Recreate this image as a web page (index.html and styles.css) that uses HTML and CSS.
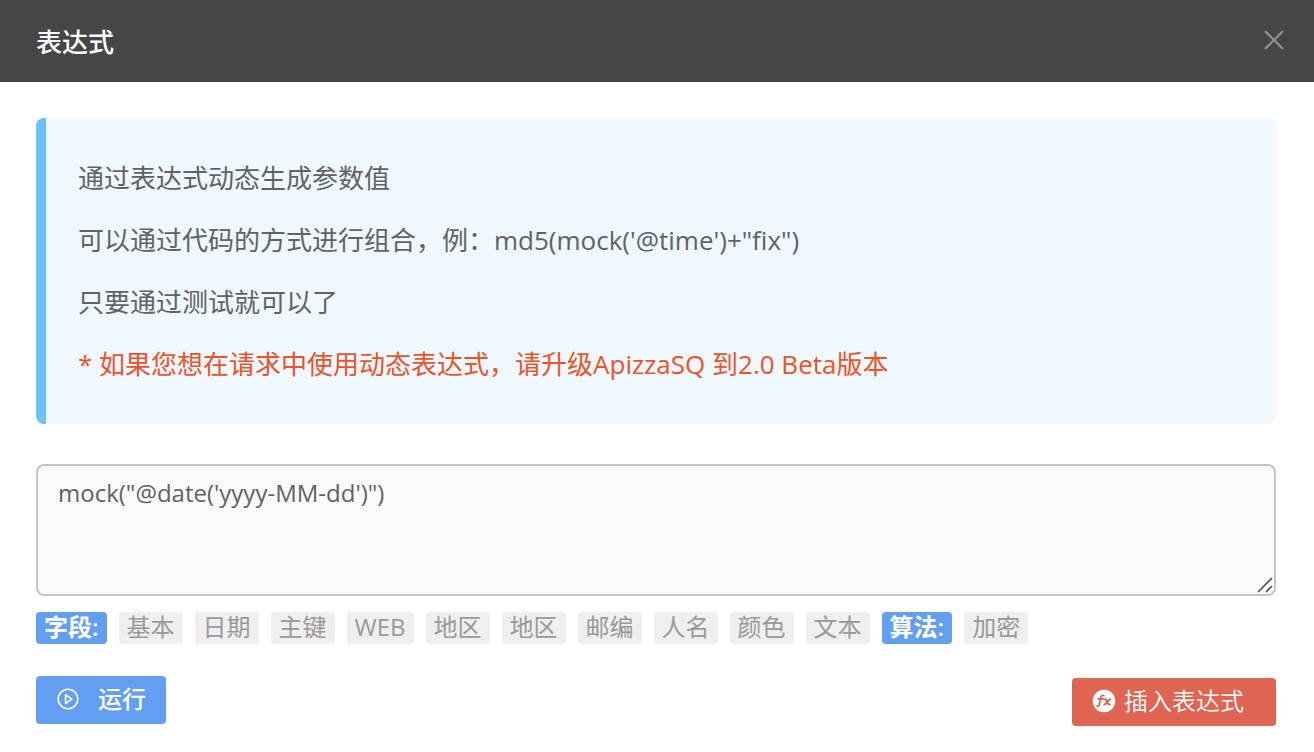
FILE: index.html
```html
<!DOCTYPE html>
<html lang="zh-CN">
<head>
<meta charset="utf-8">
<title>表达式</title>
<link rel="stylesheet" href="styles.css">
</head>
<body>
<header class="header">
  <h1 class="title">表达式</h1>
  <button class="close" type="button" aria-label="关闭">
    <svg width="20" height="20" viewBox="0 0 20 20" fill="none" stroke="currentColor" stroke-width="2"><path d="M1 1l18 18M19 1L1 19"/></svg>
  </button>
</header>
<main class="content">
  <section class="notice">
    <p>通过表达式动态生成参数值</p>
    <p>可以通过代码的方式进行组合，例：md5(mock('@time')+"fix")</p>
    <p>只要通过测试就可以了</p>
    <p class="warn">* 如果您想在请求中使用动态表达式，请升级ApizzaSQ 到2.0 Beta版本</p>
  </section>
  <div class="field">
    <textarea class="editor" aria-label="表达式">mock("@date('yyyy-MM-dd')")</textarea>
    <svg class="grip" width="16" height="16" viewBox="0 0 16 16" fill="none" stroke="#505050" stroke-width="1.6"><path d="M1 15L15 1M9 15l6-6"/></svg>
  </div>
  <div class="tags">
    <span class="tag label">字段:</span>
    <button class="tag" type="button">基本</button>
    <button class="tag" type="button">日期</button>
    <button class="tag" type="button">主键</button>
    <button class="tag" type="button">WEB</button>
    <button class="tag" type="button">地区</button>
    <button class="tag" type="button">地区</button>
    <button class="tag" type="button">邮编</button>
    <button class="tag" type="button">人名</button>
    <button class="tag" type="button">颜色</button>
    <button class="tag" type="button">文本</button>
    <span class="tag label">算法:</span>
    <button class="tag" type="button">加密</button>
  </div>
  <footer class="actions">
    <button class="btn run" type="button">
      <svg width="24" height="24" viewBox="0 0 24 24" fill="none" stroke="currentColor" stroke-width="1.6" stroke-linejoin="round"><circle cx="12" cy="12" r="9.8"/><path d="M9.600 7.600v9l6.200-4.500z"/></svg>
      <span>运行</span>
    </button>
    <button class="btn insert" type="button">
      <svg width="24" height="24" viewBox="0 0 24 24" fill="none"><circle cx="12" cy="12" r="11.300" fill="#fff"/><g stroke="#df6552" stroke-linecap="round"><path stroke-width="1.8" d="M11.800 6.600c-1.900-.7-2.800.2-3.200 2L7.400 15.400c-.3 1.500-1 2-2.300 1.600M6.300 10h4.800"/><path stroke-width="2" d="M13 10.200c2.200-.3 1.800 5.800 4.700 5.200M18.300 10.200c-2 0-3.900 5.400-6.100 5.400"/></g></svg>
      <span>插入表达式</span>
    </button>
  </footer>
</main>
</body>
</html>
```
FILE: styles.css
```css
* { box-sizing: border-box; }
body {
  margin: 0;
  background: #fff;
  color: #606266;
  font-family: "Open Sans", "Noto Sans CJK SC", sans-serif;
}
button, textarea { font-family: inherit; }
button { border: 0; cursor: pointer; }
svg { display: block; flex: none; }
.header {
  display: flex;
  align-items: center;
  justify-content: space-between;
  height: 82px;
  padding: 0 30px 2px 36px;
  background: #464646;
}
.title { margin: 0; padding-top: 4px; color: #fff; font-size: 26px; font-weight: 500; line-height: 40px; }
.close { padding: 0; background: none; color: #909399; }
.content { padding: 36px 38px 26px 36px; }
.notice {
  padding: 29px 32px;
  border-left: 10px solid #6bc1fa;
  border-radius: 8px;
  background: #eff7ff;
}
.notice p { margin: 0; font-size: 26px; line-height: 62px; }
.notice .warn { color: #f05225; }
.field { position: relative; margin-top: 40px; }
.editor {
  display: block;
  width: 100%;
  height: 132px;
  padding: 9px 20px;
  border: 2px solid #c0c4cc;
  border-radius: 8px;
  background: #fafafa;
  color: #606266;
  font-size: 24px;
  line-height: 36px;
  resize: vertical;
}
.editor::-webkit-resizer { background: transparent; }
.grip { position: absolute; right: 3px; bottom: 3px; pointer-events: none; }
.tags { display: flex; flex-wrap: wrap; gap: 12px; margin-top: 16px; }
.tag {
  height: 32px;
  padding: 0 8px 2px;
  border-radius: 4px;
  background: #efefef;
  color: #999;
  font-size: 24px;
  line-height: 30px;
}
.label { background: #629ff3; color: #fff; font-weight: 600; }
.actions { display: flex; justify-content: space-between; align-items: flex-start; margin-top: 32px; }
.btn {
  display: flex;
  align-items: center;
  height: 48px;
  border-radius: 4px;
  color: #fff;
  font-size: 24px;
  line-height: 46px;
}
.run { gap: 18px; padding: 0 20px 2px; background: #629ff3; font-weight: 500; }
.insert { gap: 8px; margin-top: 2px; padding: 0 32px 2px 20px; background: #df6552; font-weight: 350; }
```
